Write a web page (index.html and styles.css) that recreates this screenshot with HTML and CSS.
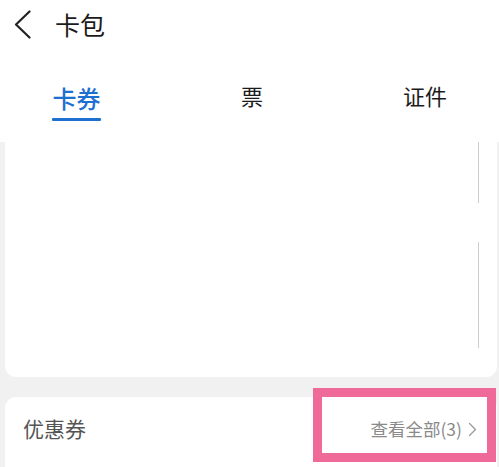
FILE: index.html
```html
<!DOCTYPE html>
<html lang="zh-CN">
<head>
<meta charset="utf-8">
<title>卡包</title>
<link rel="stylesheet" href="styles.css">
</head>
<body>
<div class="top">
  <div class="header">
    <svg class="back" width="17" height="29" viewBox="0 0 17 29"><polyline points="15.5,1.5 2,14.5 15.5,27.5" fill="none" stroke="#222" stroke-width="2.2" stroke-linecap="round" stroke-linejoin="round"/></svg>
    <span class="title">卡包</span>
  </div>
  <div class="tabs">
    <div class="tab active"><span class="label">卡券</span><span class="bar"></span></div>
    <div class="tab"><span class="label">票</span></div>
    <div class="tab"><span class="label">证件</span></div>
  </div>
</div>
<div class="card main">
  <span class="vline l1"></span>
  <span class="vline l2"></span>
</div>
<div class="card coupons">
  <span class="name">优惠券</span>
  <span class="more">查看全部(3)<svg class="chev" width="9" height="15" viewBox="0 0 9 15"><polyline points="1.5,1.5 7.5,7.5 1.5,13.5" fill="none" stroke="#999" stroke-width="1.3" stroke-linecap="round" stroke-linejoin="round"/></svg></span>
  <span class="mark"></span>
</div>
</body>
</html>
```
FILE: styles.css
```css
html, body {
  margin: 0;
  padding: 0;
}
body {
  background: #f1f1f1;
  font-family: "Noto Sans CJK SC", "Noto Sans", sans-serif;
  width: 499px;
  height: 467px;
  overflow: hidden;
}
.top {
  background: #fff;
  height: 142px;
  box-sizing: border-box;
}
.header {
  height: 48px;
  display: flex;
  align-items: center;
  padding-left: 14px;
}
.back {
  display: block;
  margin-right: 24px;
}
.title {
  font-size: 25px;
  line-height: 25px;
  color: #1b1b1b;
}
.tabs {
  display: flex;
  justify-content: space-between;
  align-items: flex-start;
  padding: 36px 52px 0 52px;
}
.tab {
  display: flex;
  flex-direction: column;
  align-items: center;
}
.tab .label {
  font-size: 22px;
  line-height: 22px;
  color: #1b1b1b;
}
.tab.active {
  padding-top: 2px;
}
.tab.active .label {
  font-size: 24px;
  line-height: 24px;
  color: #1d6fd0;
  font-weight: 500;
}
.tab .bar {
  display: block;
  width: 49px;
  height: 3px;
  margin-top: 8px;
  background: #1d6fd0;
  border-radius: 1px;
}
.card {
  background: #fff;
  margin: 0 2px 0 5px;
}
.main {
  height: 235px;
  border-radius: 0 0 11px 11px;
  display: flex;
  flex-direction: column;
  align-items: flex-end;
  padding-right: 18px;
}
.vline {
  display: block;
  width: 1px;
  background: #cdcdcd;
}
.l1 {
  height: 61px;
}
.l2 {
  height: 106px;
  margin-top: 39px;
}
.coupons {
  margin-top: 20px;
  height: 70px;
  border-radius: 11px 11px 0 0;
  position: relative;
  display: flex;
  justify-content: space-between;
  align-items: flex-start;
  padding: 20px 20px 0 18px;
  box-sizing: border-box;
}
.name {
  font-size: 21px;
  line-height: 22px;
  color: #555;
}
.more {
  display: flex;
  align-items: center;
  font-size: 17.5px;
  line-height: 22px;
  color: #8a8a8a;
  padding-top: 1px;
}
.chev {
  display: block;
  margin-left: 6px;
}
.mark {
  position: absolute;
  right: 1px;
  top: -9px;
  width: 183px;
  height: 74px;
  box-sizing: border-box;
  border: 9px solid #ef6a98;
}
```
